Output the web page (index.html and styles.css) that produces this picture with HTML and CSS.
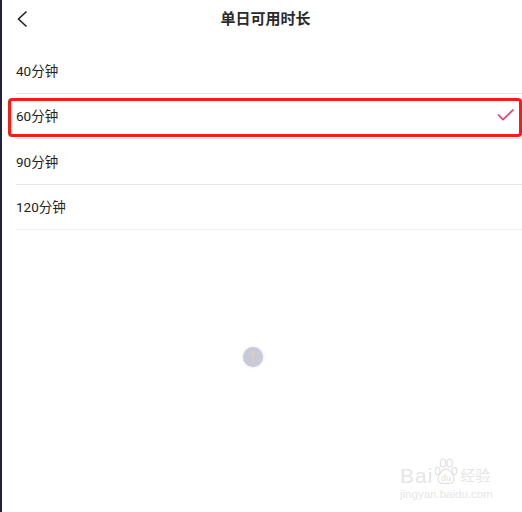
FILE: index.html

```html
<!DOCTYPE html>
<html lang="zh-CN">
<head>
  <meta charset="UTF-8">
  <meta name="viewport" content="width=device-width, initial-scale=1.0">
  <title>单日可用时长</title>
  <link rel="stylesheet" href="styles.css">
</head>
<body>
  <div class="screen">
    <div class="header">
      <svg class="back" width="12" height="18" viewBox="0 0 12 18"><path d="M10.5 1.5 L2.5 9 L10.5 16.5" fill="none" stroke="#222" stroke-width="1.6"/></svg>
      <h2>单日可用时长</h2>
    </div>

    <div class="list">
      <div class="row">40分钟</div>
      <div class="row">60分钟
        <svg class="check" width="18" height="14" viewBox="0 0 18 14"><path d="M1 6.5 L6 11.5 L16.5 1.5" fill="none" stroke="#f0386b" stroke-width="1.7"/></svg>
      </div>
      <div class="row">90分钟</div>
      <div class="row">120分钟</div>
    </div>

    <div class="highlight"></div>

    <div class="ball">
      <svg width="6" height="14" viewBox="0 0 6 14"><path d="M3 1 V13 M1 3.5 H5" fill="none" stroke="#e3d3a6" stroke-width="1.2"/></svg>
    </div>

    <div class="watermark">
      <div class="wm-top">
        <span class="wm-bai">Bai</span>
        <svg class="wm-paw" width="24" height="29" viewBox="0 0 40 44">
          <ellipse cx="6" cy="21" rx="4" ry="6" fill="none" stroke="#e2e2e2" stroke-width="2"/>
          <ellipse cx="15" cy="8" rx="4.5" ry="6.5" fill="none" stroke="#e2e2e2" stroke-width="2"/>
          <ellipse cx="26" cy="8" rx="4.5" ry="6.5" fill="none" stroke="#e2e2e2" stroke-width="2"/>
          <ellipse cx="34" cy="21" rx="4" ry="6" fill="none" stroke="#e2e2e2" stroke-width="2"/>
          <path d="M20 18 C27 18 38 33 31 40 C27 43 13 43 9 40 C2 33 13 18 20 18 Z" fill="none" stroke="#e2e2e2" stroke-width="2"/>
          <text x="20" y="38" text-anchor="middle" class="wm-du">du</text>
        </svg>
        <span class="wm-jy">经验</span>
      </div>
      <div class="wm-url">jingyan.baidu.com</div>
    </div>
  </div>
</body>
</html>
```

FILE: styles.css

```css
html, body { margin: 0; padding: 0; }
body { width: 522px; height: 512px; overflow: hidden; background: #fff; font-family: Roboto, "Noto Sans CJK SC", sans-serif; color: #222; }
.screen { position: relative; box-sizing: border-box; width: 522px; height: 512px; border-left: 2px solid #22223c; padding-left: 14px; overflow: hidden; }
.header { display: flex; align-items: center; justify-content: center; height: 38px; position: relative; padding-right: 16px; }
.header h2 { margin: 0; font-size: 15px; line-height: 38px; font-weight: 700; color: #2a2a2a; transform: translateX(4.5px); }
.back { position: absolute; left: 0; top: 10px; }
.list { margin-top: 10px; }
.row { display: flex; align-items: center; justify-content: space-between; height: 43.5px; padding-right: 7px; padding-bottom: 1px; border-bottom: 1px solid #e6e6e6; font-size: 13.5px; }
.row:last-child { border-bottom-color: #f2f2f2; }
.check { display: block; }
.highlight { position: absolute; left: 6px; top: 98px; width: 514px; height: 39px; box-sizing: border-box; border: 3px solid #fa1c14; border-radius: 4px; }
.ball { position: absolute; left: 241px; top: 347px; width: 20px; height: 20px; border-radius: 50%; background: #c9cad9; box-shadow: 0 0 3px #dcdce6; display: flex; align-items: center; justify-content: center; }
.watermark { position: absolute; left: 398px; top: 456px; color: #e6e6e6; }
.wm-top { display: flex; align-items: flex-end; height: 31px; }
.wm-bai { font-family: "Liberation Sans", sans-serif; font-size: 21px; line-height: 22px; letter-spacing: 1px; }
.wm-paw { display: block; margin-left: 1px; margin-bottom: 1px; }
.wm-du { font-family: "Liberation Sans", sans-serif; font-size: 15px; fill: #e2e2e2; }
.wm-jy { font-size: 15px; line-height: 22px; margin-left: 2px; }
.wm-url { font-family: "Liberation Sans", sans-serif; font-size: 11.5px; line-height: 14px; margin-top: 0; white-space: nowrap; }
```
